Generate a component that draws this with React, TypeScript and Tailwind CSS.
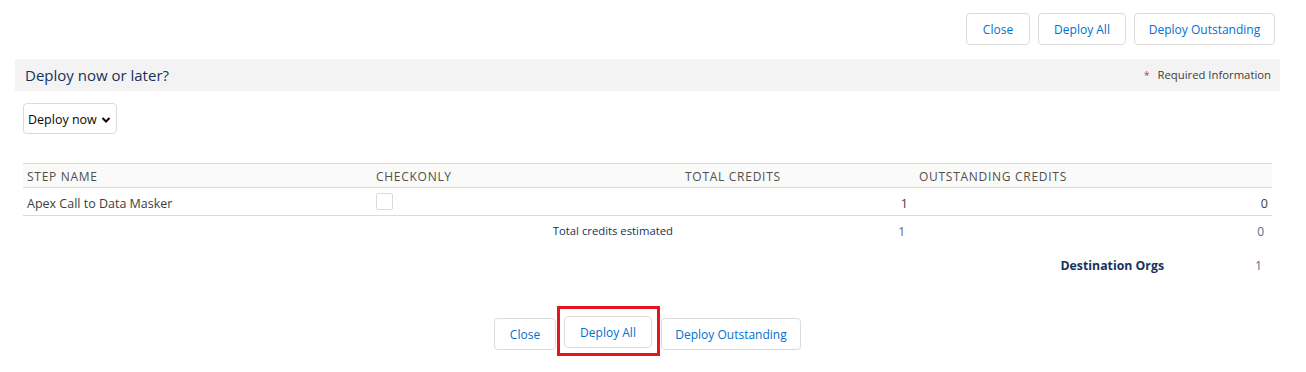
import React from "react";

const btn =
  "h-[32px] pt-[2px] rounded-[4px] border border-[#dddbda] bg-white text-[#0070d2] text-[12px] leading-none flex items-center justify-center";

export default function App() {
  return (
    <div
      className="w-[1306px] h-[372px] bg-white pl-[15px] pr-[26px] text-[#3e3e3c]"
      style={{ fontFamily: '"Open Sans", "Noto Sans", Arial, sans-serif' }}
    >
      <div className="flex justify-end gap-[8px] pt-[13px] pr-[5px]">
        <button className={`${btn} w-[64px]`}>Close</button>
        <button className={`${btn} w-[88px]`}>Deploy All</button>
        <button className={`${btn} w-[141px]`}>Deploy Outstanding</button>
      </div>

      <div className="mt-[14px] h-[32px] bg-[#f3f3f3] flex items-center justify-between pl-[10px] pr-[9px]">
        <span className="text-[15px] text-[#16325c]">Deploy now or later?</span>
        <span className="text-[11.3px] text-[#3e3e3c] flex items-center gap-[8px]">
          <span className="text-[#c23934] text-[10px]">*</span>
          Required Information
        </span>
      </div>

      <div className="ml-[8px] mt-[12px] w-[94px] h-[31px] rounded-[4px] border border-[#dddbda] flex items-center pl-[4px] pr-[5px] pt-[4px] justify-between text-[12.5px] text-[#080707]">
        <span>Deploy now</span>
        <svg width="10" height="8" viewBox="0 0 10 8" className="-mt-[2px]">
          <path d="M1.5 2 L5 5.5 L8.5 2" stroke="#080707" strokeWidth="2" fill="none" />
        </svg>
      </div>

      <div className="mx-[8px] mt-[29px] text-[12.5px]">
        <div className="grid grid-cols-[349px_309px_231px_360px] h-[25px] pt-[2px] items-center bg-[#fafaf9] border-t border-b border-[#dddbda] text-[12px] tracking-[0.06em] text-[#514f4d] uppercase">
          <div className="pl-[4px]">Step Name</div>
          <div className="pl-[4px]">Checkonly</div>
          <div className="pl-[4px]">Total Credits</div>
          <div className="pl-[7px]">Outstanding Credits</div>
        </div>
        <div className="grid grid-cols-[349px_309px_231px_360px] h-[28px] items-center border-b border-[#dddbda]">
          <div className="pl-[4px] pt-[5px] text-[#3e3e3c]">Apex Call to Data Masker</div>
          <div className="pl-[4px]">
            <div className="w-[17px] h-[17px] border border-[#dddbda] rounded-[2px] bg-white" />
          </div>
          <div className="text-right pr-[4px] pt-[5px]">1</div>
          <div className="text-right pr-[4px] pt-[5px]">0</div>
        </div>
        <div className="grid grid-cols-[658px_231px_360px] h-[29px] pt-[2px] items-center text-[11.3px]">
          <div className="text-right pr-[8px] text-[#16325c]">Total credits estimated</div>
          <div className="text-right pr-[7px] text-[#54698d] text-[12px]">1</div>
          <div className="text-right pr-[8px] text-[#54698d] text-[12px]">0</div>
        </div>
        <div className="flex justify-end items-center mt-[12px] h-[18px] text-[12.3px]">
          <span className="font-bold text-[#16325c]">Destination Orgs</span>
          <span className="w-[108px] text-right pr-[10px] text-[#54698d] font-normal">1</span>
        </div>
      </div>

      <div className="flex justify-center items-start gap-[1px] mt-[31px]">
        <button className={`${btn} w-[62px] mt-[12px]`}>Close</button>
        <div className="border-[3px] border-[#e3151f] pl-[4px] pr-[5px] pt-[7px] pb-[5px]">
          <button className={`${btn} w-[88px]`}>Deploy All</button>
        </div>
        <button className={`${btn} w-[140px] mt-[12px]`}>Deploy Outstanding</button>
      </div>
    </div>
  );
}
